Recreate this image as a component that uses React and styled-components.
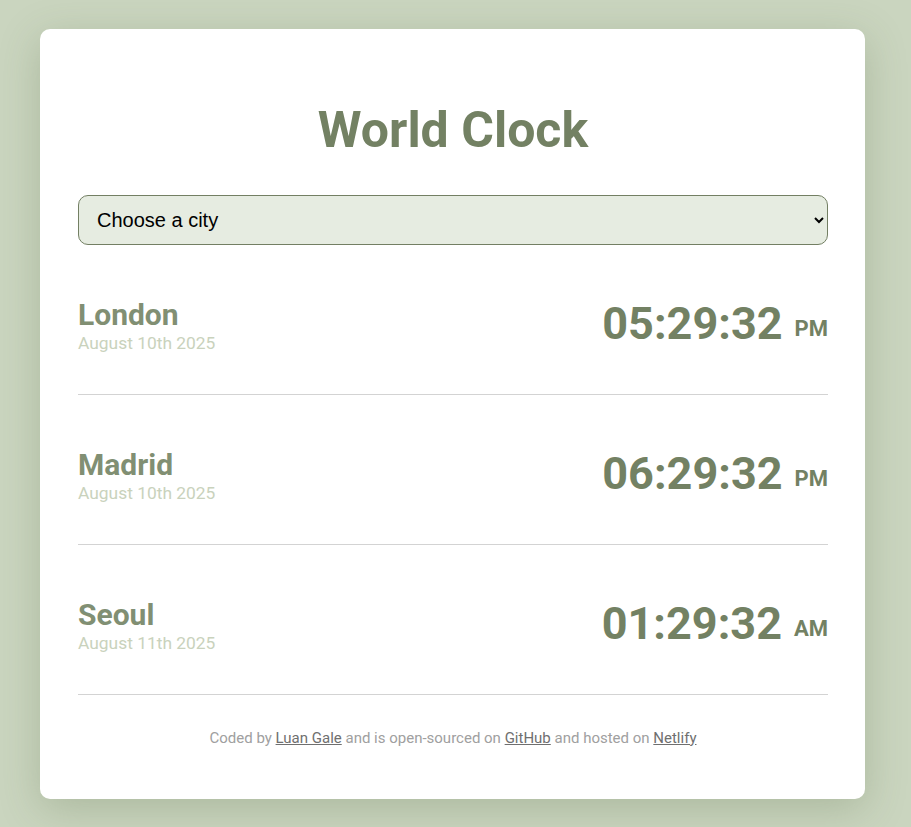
import styled, { createGlobalStyle } from "styled-components";

const GlobalStyle = createGlobalStyle`
  html, body {
    margin: 0;
    padding: 0;
    background: #cad5bf;
  }
  body {
    font-family: Roboto, "Liberation Sans", sans-serif;
  }
`;

const cities = [
  { name: "London", date: "August 10th 2025", time: "05:29:32", ampm: "PM" },
  { name: "Madrid", date: "August 10th 2025", time: "06:29:32", ampm: "PM" },
  { name: "Seoul", date: "August 11th 2025", time: "01:29:32", ampm: "AM" },
];

export default function App() {
  return (
    <>
      <GlobalStyle />
      <Page>
        <Card>
          <Title>World Clock</Title>
          <CitySelect defaultValue="">
            <option value="">Choose a city</option>
            <option value="current">My current location</option>
            <option value="Europe/London">London</option>
            <option value="Europe/Madrid">Madrid</option>
            <option value="Asia/Seoul">Seoul</option>
          </CitySelect>
          <CityList>
            {cities.map((city) => (
              <CityRow key={city.name}>
                <div>
                  <CityName>{city.name}</CityName>
                  <CityDate>{city.date}</CityDate>
                </div>
                <Time>
                  {city.time}
                  <AmPm>{city.ampm}</AmPm>
                </Time>
              </CityRow>
            ))}
          </CityList>
          <Footer>
            Coded by <FooterLink href="#">Luan Gale</FooterLink> and is
            open-sourced on <FooterLink href="#">GitHub</FooterLink> and hosted
            on <FooterLink href="#">Netlify</FooterLink>
          </Footer>
        </Card>
      </Page>
    </>
  );
}

const Page = styled.div`
  padding: 29px 46px 28px 40px;
`;

const Card = styled.div`
  background: #ffffff;
  border-radius: 10px;
  box-shadow: 0 10px 40px rgba(80, 100, 60, 0.25);
  padding: 74px 37px 52px 38px;
`;

const Title = styled.h1`
  margin: 0 0 37px;
  text-align: center;
  color: #738163;
  font-size: 50px;
  font-weight: 700;
  line-height: 1.1;
`;

const CitySelect = styled.select`
  display: block;
  width: 100%;
  height: 50px;
  padding: 0 14px;
  font-family: "Liberation Sans", Arial, sans-serif;
  font-size: 20px;
  color: #000000;
  background-color: #e6ece1;
  border: 1px solid #737f63;
  border-radius: 10px;
`;

const CityList = styled.div`
  display: flex;
  flex-direction: column;
`;

const CityRow = styled.div`
  display: flex;
  align-items: center;
  justify-content: space-between;
  padding: 52px 0 40px;
  border-bottom: 1px solid #d3d3d3;
`;

const CityName = styled.div`
  color: #818f73;
  font-size: 30px;
  font-weight: 700;
  line-height: 1.2;
`;

const CityDate = styled.div`
  color: #c9d2bc;
  font-size: 17.4px;
  line-height: 1.2;
`;

const Time = styled.div`
  color: #738163;
  font-size: 45px;
  font-weight: 700;
  line-height: 1;
  margin-top: -4px;
`;

const AmPm = styled.span`
  font-size: 22px;
  margin-left: 12px;
  vertical-align: 3px;
`;

const Footer = styled.p`
  margin: 34px 0 0;
  text-align: center;
  color: #a0a0a0;
  font-size: 15px;
`;

const FooterLink = styled.a`
  color: #6f6f6f;
  text-decoration: underline;
`;
